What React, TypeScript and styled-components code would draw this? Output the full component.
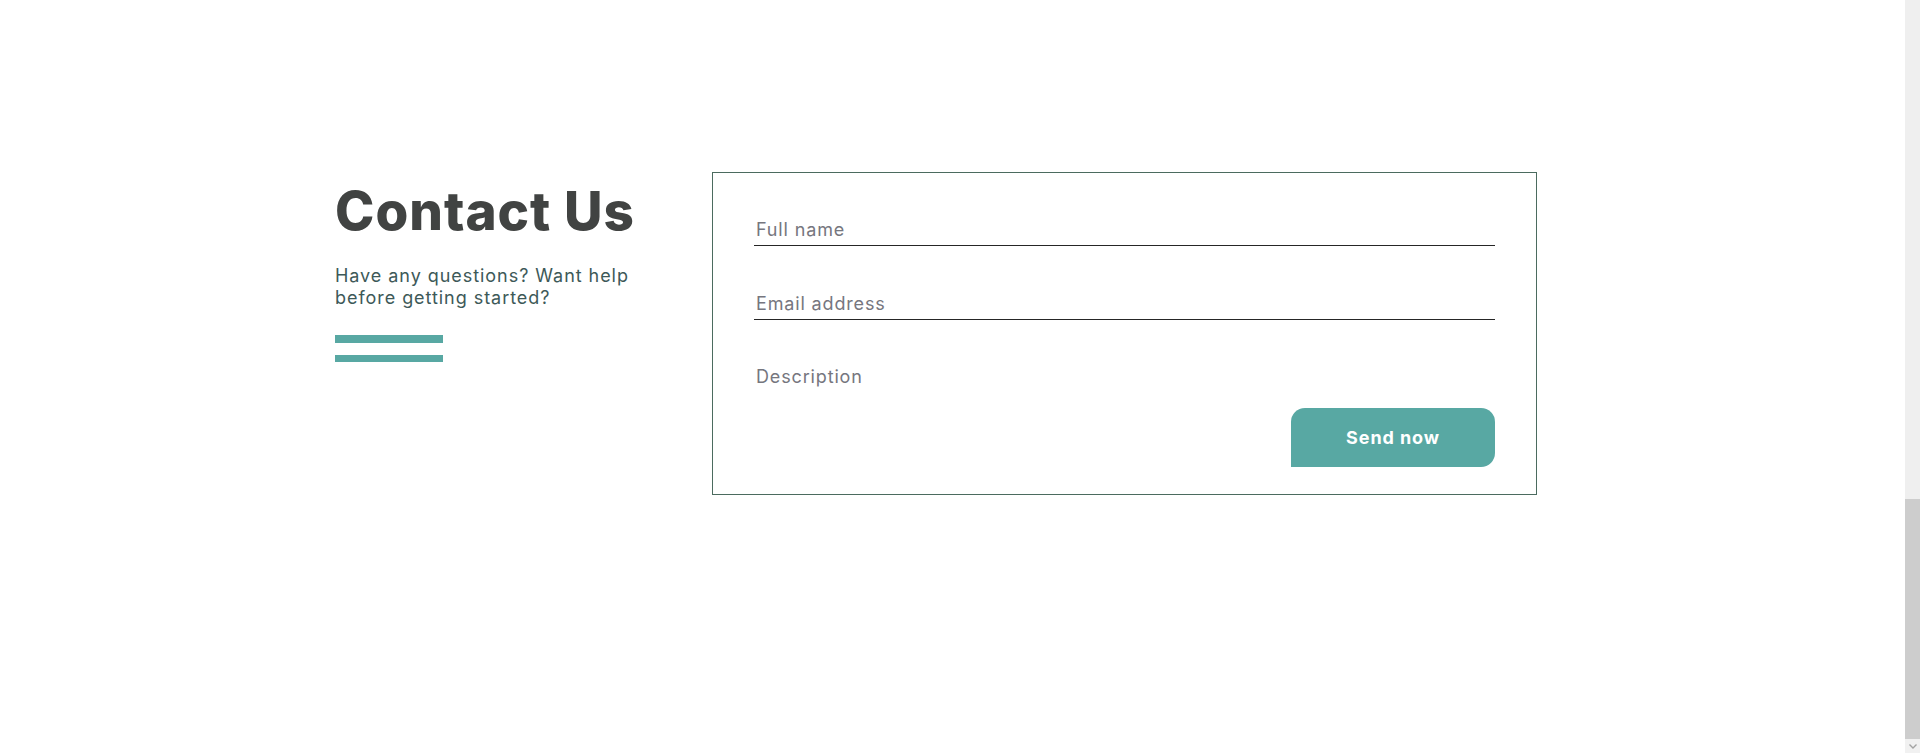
import React from "react";
import styled, { createGlobalStyle } from "styled-components";

const GlobalStyle = createGlobalStyle`
  html, body {
    margin: 0;
    padding: 0;
    background: #ffffff;
    overflow: hidden;
  }
  body {
    font-family: Inter, "Noto Sans", sans-serif;
  }
`;

const Section = styled.section`
  height: 753px;
  box-sizing: border-box;
  padding: 172px 0 0 335px;
  display: flex;
  align-items: flex-start;
  gap: 57px;
`;

const Intro = styled.div`
  width: 320px;
  flex-shrink: 0;
  padding-top: 8px;
  display: flex;
  flex-direction: column;
`;

const Title = styled.h1`
  margin: 0;
  font-family: Inter, sans-serif;
  font-size: 53px;
  line-height: 62px;
  font-weight: 800;
  color: #414342;
  letter-spacing: 1px;
  white-space: nowrap;
`;

const Lead = styled.p`
  margin: 23px 0 0;
  font-size: 18px;
  line-height: 21.6px;
  font-weight: 400;
  letter-spacing: 0.95px;
  color: #3d5958;
`;

const Bars = styled.div`
  margin-top: 27px;
  display: flex;
  flex-direction: column;
  gap: 12px;
`;

const Bar = styled.span<{ $h: number }>`
  display: block;
  width: 108px;
  height: ${(p) => p.$h}px;
  background: #58a8a3;
`;

const Card = styled.form`
  width: 825px;
  flex-shrink: 0;
  box-sizing: border-box;
  border: 1px solid #4b6b5f;
  padding: 41px 41px 27px;
  display: flex;
  flex-direction: column;
`;

const Fields = styled.div`
  display: flex;
  flex-direction: column;
  gap: 42px;
`;

const fieldBase = `
  display: block;
  width: 100%;
  box-sizing: border-box;
  margin: 0;
  padding: 4px 2px 5px;
  font-family: Inter, sans-serif;
  font-size: 18px;
  line-height: 22px;
  letter-spacing: 0.85px;
  color: #333;
  background: transparent;
  outline: none;
  &::placeholder {
    color: #76767e;
    opacity: 1;
  }
`;

const LineInput = styled.input`
  ${fieldBase}
  height: 32px;
  border: none;
  border-bottom: 1px solid #262626;
`;

const AreaInput = styled.textarea`
  ${fieldBase}
  height: 31px;
  border: none;
  resize: none;
  overflow: hidden;
`;

const SendButton = styled.button`
  align-self: flex-end;
  margin-top: 15px;
  width: 204px;
  height: 59px;
  border: none;
  border-radius: 14px 14px 14px 0;
  background: #58a8a3;
  color: #ffffff;
  font-family: Inter, sans-serif;
  font-size: 18px;
  font-weight: 700;
  letter-spacing: 0.9px;
  cursor: pointer;
`;

/* Browser scrollbar as it appears in the captured page (page scrolled to its end) */
const ScrollRail = styled.div`
  position: fixed;
  top: 0;
  right: 0;
  width: 15px;
  height: 100vh;
  display: flex;
  flex-direction: column;
  background: #efefef;
`;

const ScrollTrack = styled.div`
  flex: 1;
  display: flex;
  flex-direction: column;
  justify-content: flex-end;
`;

const ScrollThumb = styled.div`
  height: 240px;
  background: #cdcdcd;
`;

const ScrollArrow = styled.div`
  height: 14px;
  display: flex;
  align-items: center;
  justify-content: center;
  background: #f1f1f1;
`;

export default function App() {
  return (
    <>
      <GlobalStyle />
      <Section>
        <Intro>
          <Title>Contact Us</Title>
          <Lead>Have any questions? Want help before getting started?</Lead>
          <Bars>
            <Bar $h={8} />
            <Bar $h={7} />
          </Bars>
        </Intro>
        <Card onSubmit={(e) => e.preventDefault()}>
          <Fields>
            <LineInput type="text" placeholder="Full name" />
            <LineInput type="email" placeholder="Email address" />
            <AreaInput placeholder="Description" />
          </Fields>
          <SendButton type="submit">Send now</SendButton>
        </Card>
      </Section>
      <ScrollRail aria-hidden="true">
        <ScrollTrack>
          <ScrollThumb />
        </ScrollTrack>
        <ScrollArrow>
          <svg width="8" height="5" viewBox="0 0 8 5">
            <path d="M0.5 0.5 L4 4 L7.5 0.5" fill="none" stroke="#a3a3a3" strokeWidth="1.4" />
          </svg>
        </ScrollArrow>
      </ScrollRail>
    </>
  );
}
